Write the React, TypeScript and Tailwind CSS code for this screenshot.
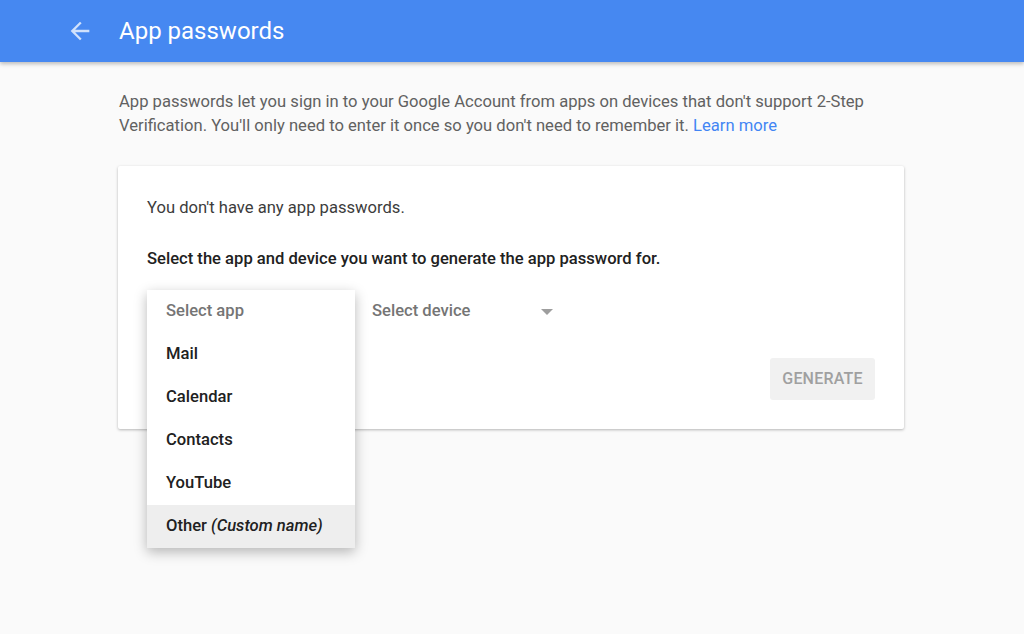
import { useState } from "react";

// App passwords page — header, intro text, card with an open app select menu

const APPS = ["Mail", "Calendar", "Contacts", "YouTube"];

function BackArrow() {
  return (
    <svg width="28" height="28" viewBox="0 0 24 24" className="fill-white/75">
      <path d="M20 11H7.83l5.59-5.59L12 4l-8 8 8 8 1.41-1.41L7.83 13H20v-2z" />
    </svg>
  );
}

export default function App() {
  const [open] = useState(true);

  return (
    <div className="min-h-[634px] bg-[#fafafa] font-['Roboto',sans-serif]">
      {/* Шапка */}
      <header className="h-[62px] bg-[#4688f1] flex items-center pl-[66px] shadow-[0_2px_4px_rgba(0,0,0,0.25)] relative z-10">
        <BackArrow />
        <h1 className="ml-[25px] text-[24px] text-white leading-none">App passwords</h1>
      </header>

      <main className="ml-[118px] w-[786px] pt-[28px]">
        <p className="pl-px text-[16.6px] leading-[24px] text-[#616161]">
          App passwords let you sign in to your Google Account from apps on devices that don't support 2-Step
          Verification. You'll only need to enter it once so you don't need to remember it.{" "}
          <a className="text-[#4285f4]">Learn more</a>
        </p>

        {/* Карточка */}
        <div className="mt-[28px] bg-white shadow-[0_1px_3px_rgba(0,0,0,0.28)] rounded-[2px] px-[29px] pt-[30px] pb-[29px]">
          <p className="text-[16.6px] leading-[24px] text-[#3c3c3c]">You don't have any app passwords.</p>
          <p className="mt-[27px] text-[16.6px] leading-[24px] font-medium text-[#212121]">
            Select the app and device you want to generate the app password for.
          </p>

          <div className="mt-[19px] flex">
            <div className="relative w-[208px] h-[43px]">
              {open && (
                <ul className="absolute left-0 top-0 z-20 w-[208px] bg-white shadow-[0_4px_12px_rgba(0,0,0,0.28)]">
                  <li className="h-[43px] flex items-center pl-[19px] text-[16.6px] font-medium text-[#757575]">Select app</li>
                  {APPS.map((a) => (
                    <li key={a} className="h-[43px] flex items-center pl-[19px] text-[16.6px] font-medium text-[#212121]">
                      {a}
                    </li>
                  ))}
                  <li className="h-[43px] flex items-center pl-[19px] text-[16.6px] font-medium text-[#212121] bg-[#eeeeee]">
                    Other&nbsp;<i>(Custom name)</i>
                  </li>
                </ul>
              )}
            </div>
            <div className="w-[208px] h-[43px] flex items-center justify-between pl-[17px] pr-[10px]">
              <span className="text-[16.6px] font-medium text-[#757575]">Select device</span>
              <span className="w-0 h-0 border-x-[6px] border-x-transparent border-t-[6px] border-t-[#9e9e9e]" />
            </div>
          </div>

          <div className="mt-[25px] flex justify-end">
            <button className="h-[42px] w-[105px] rounded-[3px] bg-[#f1f1f1] text-[16px] font-medium text-[#a0a0a0] tracking-[0.2px]">
              GENERATE
            </button>
          </div>
        </div>
      </main>
    </div>
  );
}
